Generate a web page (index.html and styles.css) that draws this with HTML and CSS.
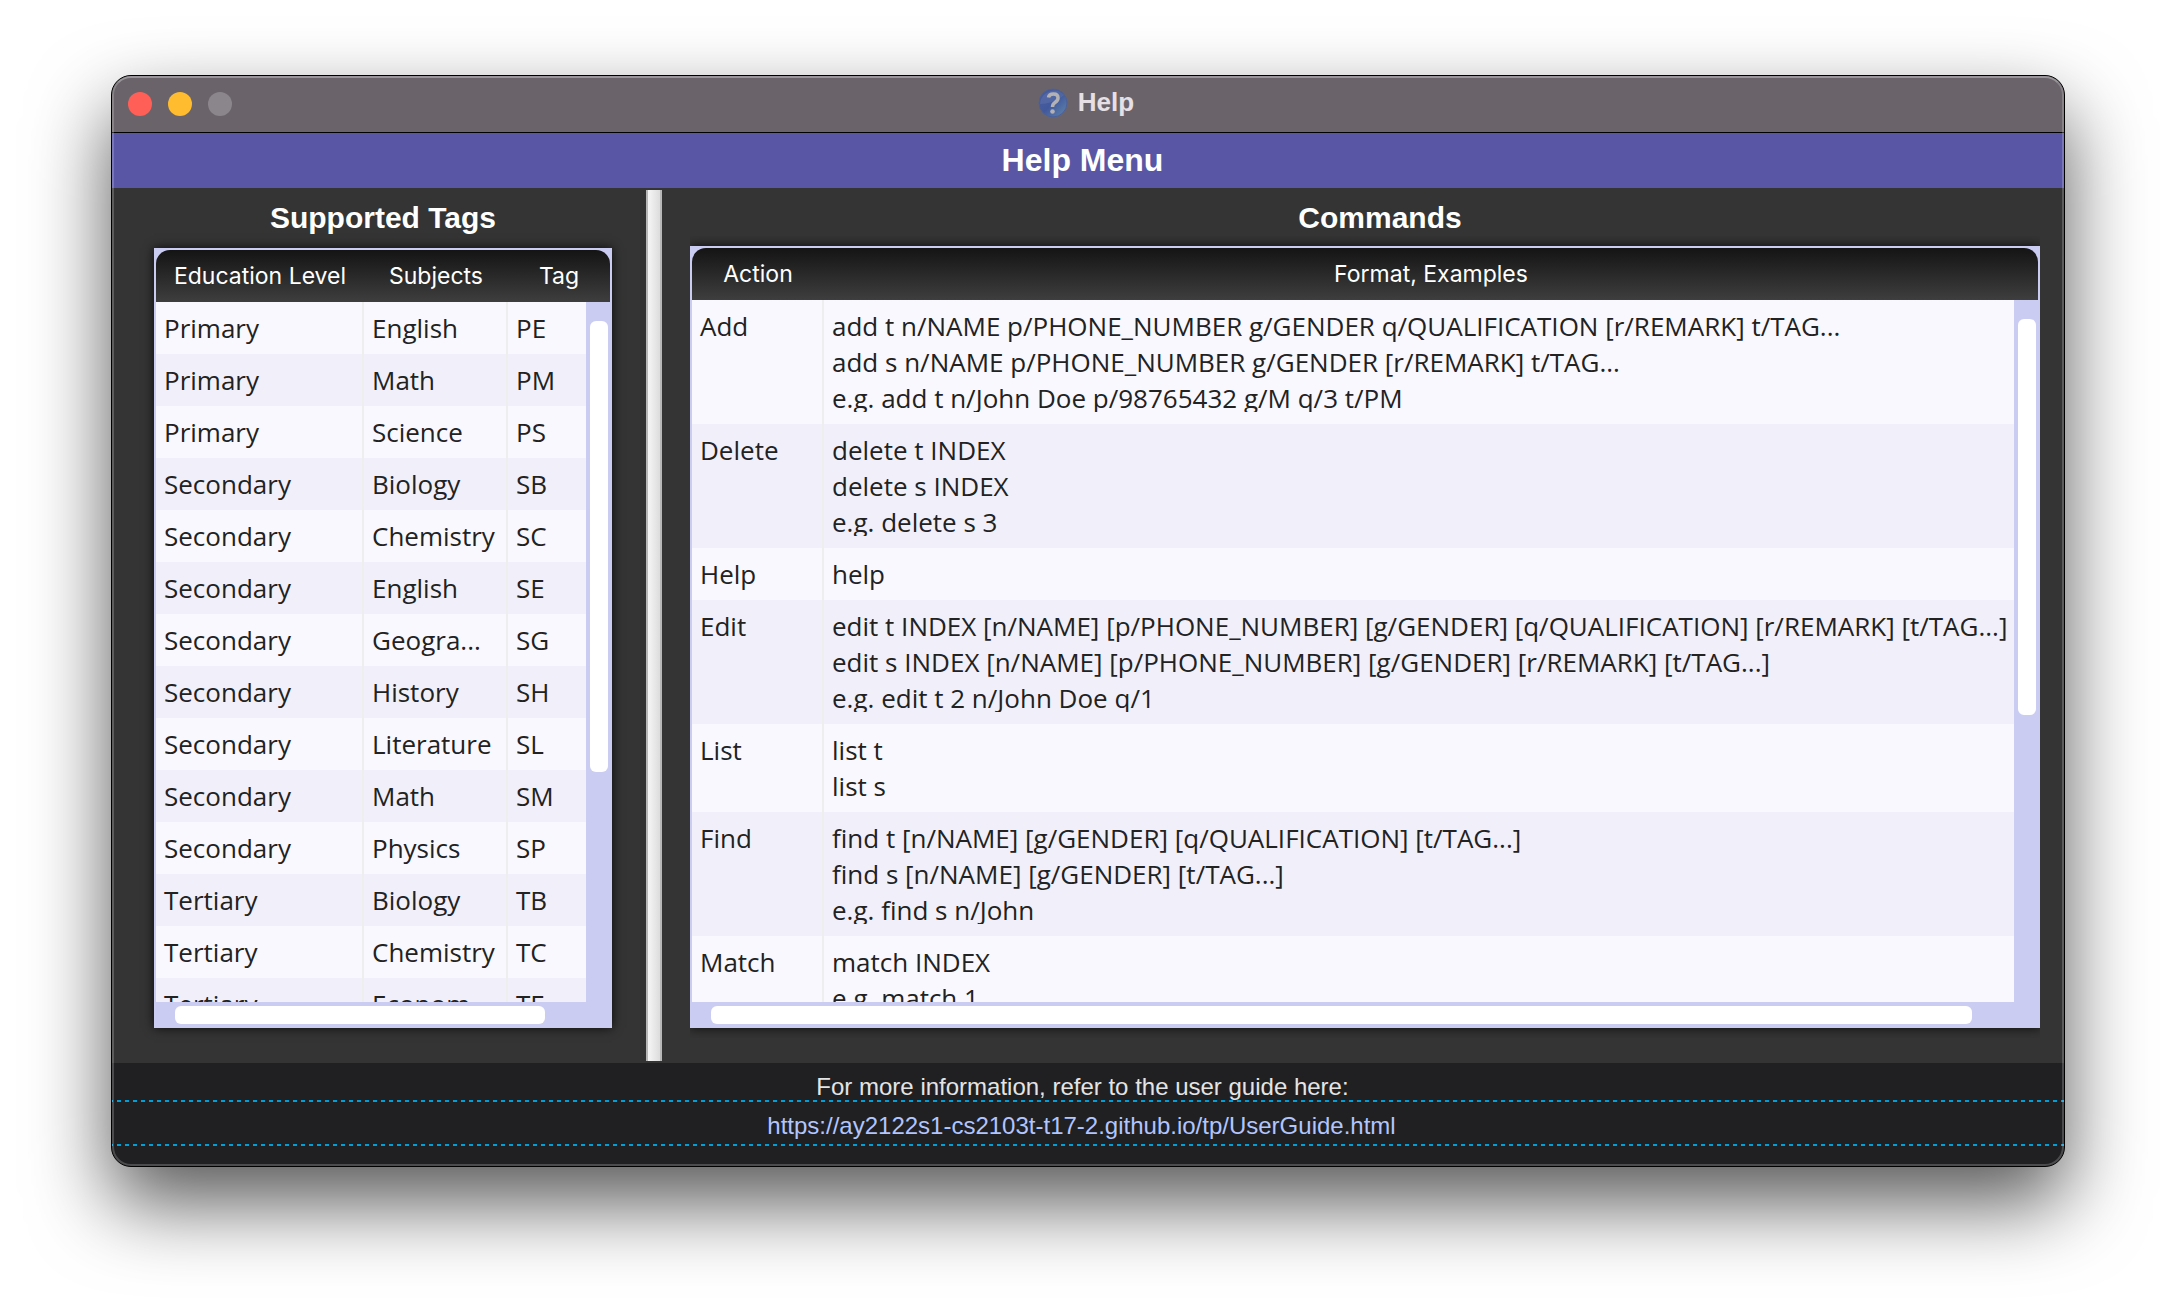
FILE: index.html
```html
<!DOCTYPE html>
<html lang="en">
<head>
<meta charset="utf-8">
<title>Help</title>
<link rel="stylesheet" href="styles.css">
</head>
<body>
<div class="window">
  <header class="titlebar">
    <div class="lights">
      <button class="light light-close" aria-label="Close"></button>
      <button class="light light-minimise" aria-label="Minimise"></button>
      <button class="light light-zoom" aria-label="Zoom" disabled></button>
    </div>
    <div class="caption">
      <svg class="caption-icon" viewBox="0 0 30 30" aria-hidden="true">
        <defs>
          <linearGradient id="ball" x1="0" y1="0" x2="1" y2="1">
            <stop offset="0" stop-color="#4a5c9c"/>
            <stop offset="0.5" stop-color="#41599c"/>
            <stop offset="1" stop-color="#6288ac"/>
          </linearGradient>
        </defs>
        <circle cx="15" cy="15" r="14" fill="url(#ball)" stroke="#4c609a"/>
        <path d="M2 16C9 16 20 13 26 7A14 14 0 0 0 2 16Z" fill="#fff" opacity="0.08"/>
        <path d="M10.500 9.500Q11 6 15.500 6Q20 6 20 10Q20 12.500 17 14.500Q14.500 16 14.500 19" fill="none" stroke="#b4b1b4" stroke-width="3.500"/>
        <circle cx="14.500" cy="23.500" r="2.300" fill="#b4b1b4"/>
      </svg>
      <span>Help</span>
    </div>
  </header>

  <h1 class="banner">Help Menu</h1>

  <main class="split">
    <section class="pane pane-tags">
      <h2 class="pane-title">Supported Tags</h2>
      <div class="panel">
        <table class="grid">
          <colgroup><col class="col-level"><col class="col-subject"><col></colgroup>
          <thead><tr><th>Education Level</th><th>Subjects</th><th>Tag</th></tr></thead>
          <tbody>
            <tr><td>Primary</td><td>English</td><td>PE</td></tr>
            <tr><td>Primary</td><td>Math</td><td>PM</td></tr>
            <tr><td>Primary</td><td>Science</td><td>PS</td></tr>
            <tr><td>Secondary</td><td>Biology</td><td>SB</td></tr>
            <tr><td>Secondary</td><td>Chemistry</td><td>SC</td></tr>
            <tr><td>Secondary</td><td>English</td><td>SE</td></tr>
            <tr><td>Secondary</td><td>Geogra...</td><td>SG</td></tr>
            <tr><td>Secondary</td><td>History</td><td>SH</td></tr>
            <tr><td>Secondary</td><td>Literature</td><td>SL</td></tr>
            <tr><td>Secondary</td><td>Math</td><td>SM</td></tr>
            <tr><td>Secondary</td><td>Physics</td><td>SP</td></tr>
            <tr><td>Tertiary</td><td>Biology</td><td>TB</td></tr>
            <tr><td>Tertiary</td><td>Chemistry</td><td>TC</td></tr>
            <tr><td>Tertiary</td><td>Econom...</td><td>TE</td></tr>
          </tbody>
        </table>
        <div class="track track-v"><div class="thumb"></div></div>
        <div class="track track-h"><div class="thumb"></div></div>
      </div>
    </section>

    <div class="divider" role="separator"></div>

    <section class="pane pane-commands">
      <h2 class="pane-title">Commands</h2>
      <div class="panel">
        <table class="grid">
          <colgroup><col class="col-action"><col></colgroup>
          <thead><tr><th>Action</th><th>Format, Examples</th></tr></thead>
          <tbody>
            <tr><td>Add</td><td><div class="lines">add t n/NAME p/PHONE_NUMBER g/GENDER q/QUALIFICATION [r/REMARK] t/TAG...<br>add s n/NAME p/PHONE_NUMBER g/GENDER [r/REMARK] t/TAG...<br>e.g. add t n/John Doe p/98765432 g/M q/3 t/PM</div></td></tr>
            <tr><td>Delete</td><td><div class="lines">delete t INDEX<br>delete s INDEX<br>e.g. delete s 3</div></td></tr>
            <tr><td>Help</td><td>help</td></tr>
            <tr><td>Edit</td><td><div class="lines">edit t INDEX [n/NAME] [p/PHONE_NUMBER] [g/GENDER] [q/QUALIFICATION] [r/REMARK] [t/TAG...]<br>edit s INDEX [n/NAME] [p/PHONE_NUMBER] [g/GENDER] [r/REMARK] [t/TAG...]<br>e.g. edit t 2 n/John Doe q/1</div></td></tr>
            <tr><td>List</td><td>list t<br>list s</td></tr>
            <tr><td>Find</td><td><div class="lines">find t [n/NAME] [g/GENDER] [q/QUALIFICATION] [t/TAG...]<br>find s [n/NAME] [g/GENDER] [t/TAG...]<br>e.g. find s n/John</div></td></tr>
            <tr><td>Match</td><td>match INDEX<br>e.g. match 1</td></tr>
          </tbody>
        </table>
        <div class="track track-v"><div class="thumb"></div></div>
        <div class="track track-h"><div class="thumb"></div></div>
      </div>
    </section>
  </main>

  <footer class="footer">
    <p class="footer-text">For more information, refer to the user guide here:</p>
    <a class="footer-link" href="https://ay2122s1-cs2103t-t17-2.github.io/tp/UserGuide.html">https://ay2122s1-cs2103t-t17-2.github.io/tp/UserGuide.html</a>
  </footer>
</div>
</body>
</html>
```
FILE: styles.css
```css
* { box-sizing: border-box; }

body {
  margin: 0;
  height: 100vh;
  padding: 75px 111px 147px;
  background: #fff;
  overflow: hidden;
  font-family: "Liberation Sans", Arial, sans-serif;
}

.window {
  position: relative;
  display: flex;
  flex-direction: column;
  height: 100%;
  border: 1px solid #000;
  border-radius: 20px;
  background: #343434;
  overflow: hidden;
  box-shadow: 0 36px 80px rgba(0, 0, 0, 0.66);
}

/* light rim inside the window's edge */
.window::after {
  content: "";
  position: absolute;
  inset: 0;
  border: 2px solid rgba(255, 255, 255, 0.2);
  border-top-color: rgba(255, 255, 255, 0.32);
  border-radius: 19px;
  pointer-events: none;
}

.titlebar {
  display: grid;
  grid-template-columns: 1fr auto 1fr;
  align-items: center;
  flex: none;
  height: 57px;
  padding: 0 20px 0 16px;
  border-bottom: 1px solid #000;
  background: #6a646a;
}

.lights { display: flex; gap: 16px; }

.light {
  width: 24px;
  height: 24px;
  padding: 0;
  border: 0;
  border-radius: 50%;
}
.light-close { background: #ff5f57; }
.light-minimise { background: #febc2e; }
.light-zoom { background: #8b868b; }

.caption {
  display: flex;
  align-items: center;
  gap: 10px;
  height: 56px;
  padding-bottom: 3px;
  color: #e6e0e6;
  font-size: 26px;
  font-weight: bold;
}
.caption-icon { width: 30px; height: 30px; }

.banner {
  flex: none;
  height: 55px;
  margin: 0;
  padding-right: 11px;
  background: #5856a5;
  color: #fff;
  font-size: 32px;
  line-height: 54px;
  text-align: center;
}

.split {
  display: grid;
  grid-template-columns: minmax(0, 534fr) 16px minmax(0, 1402fr);
  flex: 1;
  min-height: 0;
}

.pane {
  display: flex;
  flex-direction: column;
  min-height: 0;
}
.pane-tags { padding: 0 34px 35px 42px; }
.pane-commands { padding: 0 24px 35px 28px; }

.pane-title {
  flex: none;
  height: 60px;
  margin: 0;
  color: #fff;
  font-size: 30px;
  line-height: 59px;
  text-align: center;
}
.pane-commands .pane-title { height: 58px; padding-left: 30px; }

.divider {
  margin: 2px 0;
  border: solid #b8b8b8;
  border-width: 0 2px;
  background: linear-gradient(to right, #f6f6f6, #dcdcdc);
}

.panel {
  position: relative;
  flex: 1;
  min-height: 0;
  border: 2px solid #cbccf2;
  background: #cbccf2;
  box-shadow: 0 0 10px rgba(0, 0, 0, 0.8);
}
.pane-commands .panel { clip-path: inset(-10px 0); }

.grid {
  display: block;
  height: 100%;
  overflow: hidden;
  border-spacing: 0;
}
.grid thead, .grid tbody { display: table; width: 100%; table-layout: fixed; border-spacing: 0; }
.grid colgroup { display: none; }

.grid th {
  height: 52px;
  padding: 0;
  color: #fff;
  font: 400 23px/52px Inter, sans-serif;
}
.grid thead {
  border-radius: 14px 14px 0 0;
  background: linear-gradient(#141414, #3e3e3e);
}

.grid td {
  padding: 8px 6px 8px 8px;
  border-right: 2px solid #eee;
  color: #222;
  font: 400 26px/36px "Open Sans", sans-serif;
  vertical-align: top;
  white-space: nowrap;
}
.grid td:last-child { border-right: 0; }
.grid tbody tr { background: #f9f8ff; }
.grid tbody tr:nth-child(even) { background: #f1f0fa; }

.pane-tags th:nth-child(1), .pane-tags td:nth-child(1) { width: 208px; }
.pane-tags th:nth-child(2), .pane-tags td:nth-child(2) { width: 144px; }
.pane-commands th:nth-child(1), .pane-commands td:nth-child(1) { width: 132px; }

/* three-line cells cut the descenders of their last line */
.lines { height: 104px; margin-bottom: 4px; overflow: hidden; }

.track { position: absolute; background: #cbccf2; }
.track-v { top: 52px; right: 0; bottom: 0; width: 24px; padding: 19px 2px 0 4px; }
.track-h { left: 0; right: 0; bottom: 0; height: 24px; padding: 4px 0 2px 19px; }
.thumb { border-radius: 6px; background: #fff; }
.track-v .thumb { width: 18px; height: 64%; }
.track-h .thumb { width: 85%; height: 18px; }
.pane-commands .track-v .thumb { height: 56%; }
.pane-commands .track-h .thumb { width: 95%; }

.footer {
  flex: none;
  height: 103px;
  background: #202022;
  font-size: 24px;
  text-align: center;
}
.footer-text {
  height: 37px;
  margin: 0;
  padding-right: 11px;
  color: #e4e4e4;
  line-height: 47px;
}
.footer-link {
  display: block;
  height: 46px;
  padding-right: 13px;
  background:
    repeating-linear-gradient(to right, #009fda 0 1px, transparent 1px 5px, #009fda 5px 8px) top / 100% 2px no-repeat,
    repeating-linear-gradient(to right, #009fda 0 1px, transparent 1px 5px, #009fda 5px 8px) bottom / 100% 2px no-repeat;
  color: #b1c5ff;
  line-height: 52px;
  text-decoration: none;
}
```
